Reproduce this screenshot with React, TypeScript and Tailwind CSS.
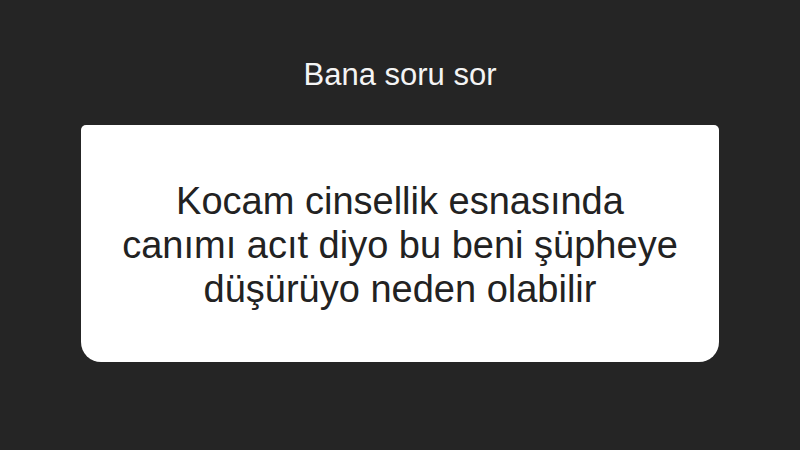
import React from "react";

const lines = ["Kocam cinsellik esnasında", "canımı acıt diyo bu beni şüpheye", "düşürüyo neden olabilir"];

const App: React.FC = () => {
  return (
    <div className="w-[800px] h-[450px] bg-[#252525] flex flex-col items-center font-['Liberation_Sans',Arial,sans-serif]">
      <div className="mt-[57px] h-[34px] flex items-center text-[31px] leading-none text-[#f4f4f4]">
        Bana soru sor
      </div>
      <div className="mt-[34px] w-[638px] h-[237px] bg-white rounded-t-[5px] rounded-b-[20px] flex flex-col items-center justify-center pt-[2px]">
        {lines.map((line) => (
          <p key={line} className="text-[38px] leading-[44px] text-[#222222] text-center whitespace-nowrap">
            {line}
          </p>
        ))}
      </div>
    </div>
  );
};

export default App;
